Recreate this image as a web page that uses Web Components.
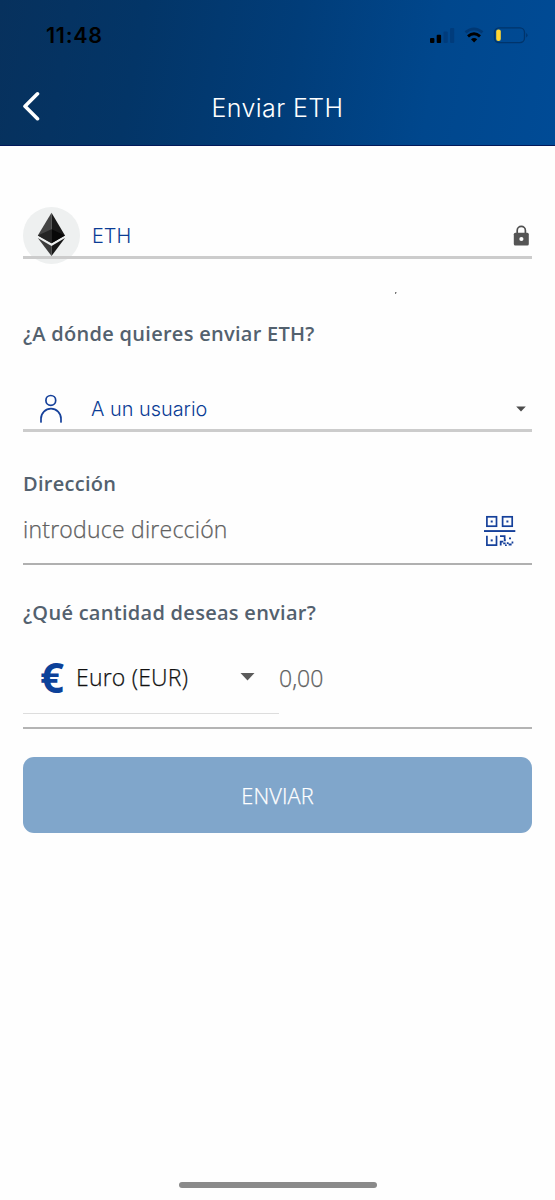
<!DOCTYPE html>
<html lang="es">
<head>
<meta charset="utf-8">
<title>Enviar ETH</title>
<style>
html,body{margin:0;height:100%;background:#fefefe;font-family:"Open Sans","Noto Sans",sans-serif}
</style>
</head>
<body>
<send-screen></send-screen>
<script>
const define = (name, html) => customElements.define(name, class extends HTMLElement {
  constructor() {
    super();
    this.attachShadow({ mode: 'open' }).innerHTML = html;
  }
});

define('status-bar', `
<style>
:host{display:flex;justify-content:space-between;height:70px;box-sizing:border-box;padding:24px 27px 0 46px;color:#000}
.time{font:600 21.5px/24px Inter,sans-serif;letter-spacing:.75px;margin-top:-1px}
.icons{display:flex;padding-top:2px}
svg{display:block}
</style>
<span class="time">11:48</span>
<span class="icons"><svg width="98" height="20" viewBox="0 0 98 20">
<rect y="12" width="4.4" height="5" rx="1"/><rect x="6.7" y="8.7" width="4.4" height="8.3" rx="1"/>
<g fill="#003c7c"><rect x="13.5" y="5.5" width="4.2" height="11.5" rx="1"/><rect x="20" y="2" width="4.2" height="15" rx="1"/></g>
<g fill="none"><path d="M35.5 6.4Q44-.7 52.5 6.4" stroke="#003874" stroke-width="2.8"/><path d="M38 10.3Q44 5.3 50 10.3" stroke="#000" stroke-width="3"/></g>
<path d="M41 13.2Q44 10.8 47.2 13.2L44.1 16.6Z"/>
<rect x="64.5" y="1.8" width="30" height="14.8" rx="4.5" fill="none" stroke="#00346b" stroke-width="1.3"/>
<rect x="66.2" y="3.4" width="4.6" height="11.6" rx="2" fill="#ffd633"/>
<path d="M96.2 7Q98.8 9.2 96.2 11.5Z" fill="#00346b"/>
</svg></span>`);

define('app-header', `
<style>
:host{display:block;height:146px;box-sizing:border-box;border-bottom:1px solid #02195a;background:linear-gradient(100deg,#07315d 0%,#033567 25%,#013d79 52%,#00478d 77%,#004b96 100%);color:#fff}
.bar{display:grid;grid-template-columns:80px 1fr 80px;align-items:center;height:74px}
svg{display:block;margin:-2px 0 0 22px}
.title{padding-top:2px;text-align:center;white-space:nowrap;font:300 25px/32px Inter,sans-serif;letter-spacing:.4px}
</style>
<status-bar></status-bar>
<div class="bar"><svg width="20" height="30" viewBox="0 0 20 30"><path d="M15.5 2.8L3 15.2L15.5 27.7" fill="none" stroke="#fff" stroke-width="3.6" stroke-linejoin="round" stroke-linecap="round"/></svg>
<div class="title"><slot></slot></div></div>`);

define('field-row', `
<style>
:host{display:flex;align-items:center;box-sizing:border-box;height:52px;padding-top:8px;border-bottom:3px solid #cccccc;color:#0a3c95;font:300 19.9px/26px Inter,sans-serif}
.lead{flex:0 0 56px;height:57px;margin-right:12px;display:flex;justify-content:center;align-items:center}
.text{flex:1;white-space:nowrap}
::slotted(svg){display:block;flex:none}
</style>
<span class="lead"><slot name="lead"></slot></span><span class="text"><slot></slot></span><slot name="end"></slot>`);

define('field-title', `
<style>:host{display:block;white-space:nowrap;font:600 20px/28px "Open Sans",sans-serif;letter-spacing:.28px;color:#53616e}</style><slot></slot>`);

define('address-field', `
<style>
:host{display:flex;box-sizing:border-box;height:67px;justify-content:space-between;border-bottom:2px solid #b0b0b0;padding:15px 16px 0 0;color:#606060;font:300 23px/32px "Open Sans",sans-serif;letter-spacing:.23px;-webkit-text-stroke:.25px currentColor}
svg{display:block;margin-top:2px}
</style>
<span><slot></slot></span>
<svg width="32" height="32" viewBox="0 0 32 32" fill="#15409a">
<g fill="none" stroke="#15409a" stroke-width="1.7"><rect x="2.9" y="1.8" width="9.6" height="9.4"/><rect x="18.6" y="1.8" width="9.6" height="9.4"/><path d="M2.9 20.8V30.2H12.5V20.8"/></g>
<rect x="6.7" y="5.5" width="2" height="2"/><rect x="22.4" y="5.5" width="2" height="2"/><rect x="6.7" y="24.4" width="2" height="2"/>
<rect y="15.1" width="31.3" height="1.9"/>
<path d="M16 20.3h5.5v4h-1.7v-2.3H16zM19.8 24.3h2v2h-2zM15.8 25.8h3.5v1.7h-1.7v3h-1.8zM19.2 27.4h2.4v1.8h-2.4zM21 29.4h1.8v1.7H21zM25 22.5h2v1.8h-2zM22.8 27.2h1.8v1.8h-1.8zM24.6 28.6h3v1.8h-3zM27.6 26.6h1.7v1.8h-1.7z"/>
</svg>`);

define('amount-field', `
<style>
:host{display:flex;box-sizing:border-box;height:102px;border-bottom:2px solid #b4b4b4;font:300 23px/32px "Open Sans",sans-serif;color:#606060;-webkit-text-stroke:.25px currentColor}
.currency{display:flex;align-items:center;flex:0 0 256px;box-sizing:border-box;height:87px;padding:14px 24px 0 17px;border-bottom:1px solid #ddd;color:#111}
.symbol{width:36px;color:#0c4199;font:700 42px/46px "Open Sans",sans-serif;-webkit-text-stroke:0}
.name{flex:1;white-space:nowrap;letter-spacing:.2px}
.value{padding-top:35px}
</style>
<div class="currency"><span class="symbol">€</span><span class="name"><slot name="currency"></slot></span><svg width="15" height="8" viewBox="0 0 15 8"><path d="M.5 0h14L7.5 7.5z" fill="#5b5b5b"/></svg></div>
<span class="value"><slot></slot></span>`);

define('primary-button', `
<style>
:host{display:block}
button{display:block;width:100%;height:76px;margin:0;padding:2px 0 0;border:0;border-radius:11px;background:#80a6cb;color:#fff;font:300 21.8px/30px "Open Sans",sans-serif;letter-spacing:.1px;-webkit-text-stroke:.25px currentColor}
</style><button><slot></slot></button>`);

define('send-screen', `
<style>
:host{display:flex;flex-direction:column;height:1200px;overflow:hidden}
main{flex:1;padding:61px 23px 0}
.asset{margin-bottom:32px}
.dot{display:block;margin:0 0 25px 371px}
.recipient{margin:32px 0 38px}
.amount{margin-top:34px}
primary-button{margin-top:28px}
.home{width:198px;height:6px;border-radius:3px;background:#8a8a8a;margin:0 auto 12px}
</style>
<app-header>Enviar ETH</app-header>
<main>
<field-row class="asset">ETH
<svg slot="lead" width="57" height="57" viewBox="0 0 57 57"><circle cx="28.5" cy="28.5" r="28.5" fill="#eef0f0"/><path d="M0 49h57v3H0z" fill="#ccc"/>
<path d="M28.5 5.7L14.8 28.4L28.5 36.3Z" fill="#444"/><path d="M28.5 5.7V36.3L42 28.4Z" fill="#191919"/><path d="M14.8 28.4L28.5 22.3V36.3Z" fill="#242424"/><path d="M28.5 22.3L42 28.4L28.5 36.3Z" fill="#080808"/><path d="M14.8 31.1L28.5 39V49Z" fill="#3c3c3c"/><path d="M28.5 39L42 31.1L28.5 49Z" fill="#171717"/></svg>
<svg slot="end" width="19" height="21" viewBox="0 0 19 21"><path d="M4.2 9V5.5a4.1 4.1 0 0 1 8.2 0V9" fill="none" stroke="#505050" stroke-width="1.7"/><rect x=".8" y="7.8" width="15" height="12.6" rx="1.5" fill="#555"/><circle cx="8.4" cy="14" r="2.1" fill="#fff"/></svg>
</field-row>
<svg class="dot" width="4" height="4" viewBox="0 0 4 4"><path d="M1 1h1.7l-.8 2H1z" fill="#777"/></svg>
<field-title>¿A dónde quieres enviar ETH?</field-title>
<field-row class="recipient">A un usuario
<svg slot="lead" width="24" height="30" viewBox="0 0 24 30" fill="none" stroke="#15409a" stroke-width="1.7"><circle cx="11.8" cy="6.4" r="4.9"/><path d="M2 28V24.7a10 10 0 0 1 20 0V28" stroke-linecap="round"/></svg>
<svg slot="end" width="16" height="6" viewBox="0 0 16 6"><path d="M.2.5h9.6L5 5.5z" fill="#4c4c4c"/></svg>
</field-row>
<field-title>Dirección</field-title>
<address-field>introduce dirección</address-field>
<field-title class="amount">¿Qué cantidad deseas enviar?</field-title>
<amount-field><span slot="currency">Euro (EUR)</span>0,00</amount-field>
<primary-button>ENVIAR</primary-button>
</main>
<div class="home"></div>`);
</script>
</body>
</html>
